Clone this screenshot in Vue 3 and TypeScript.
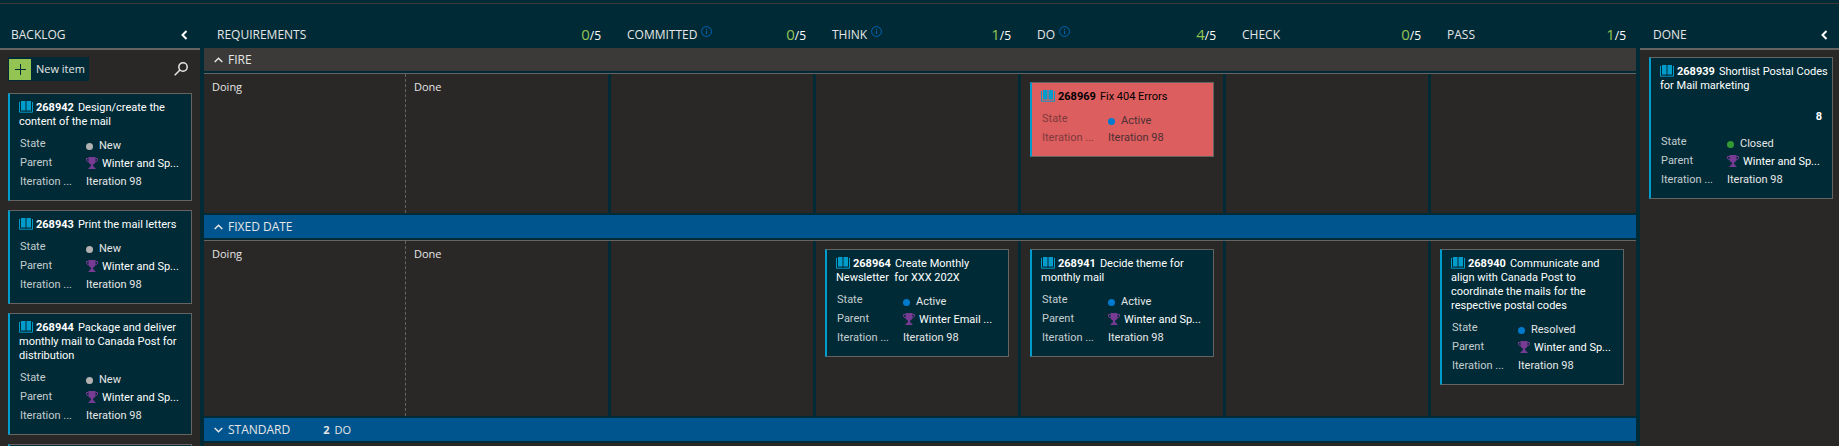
<script setup lang="ts">
import { defineComponent, h } from 'vue'

interface Item {
  id: number
  title: string
  state: string
  parent?: string
  effort?: number
  alert?: boolean
}
interface Column {
  key: string
  name: string
  count?: number
  info?: boolean
}
interface Lane {
  name: string
  color: string
  items: Record<string, Item[]>
}

const spring = 'Winter and Sp...'
const dotColors: Record<string, string> = {
  New: 'new',
  Active: 'active',
  Resolved: 'active',
  Closed: 'closed',
}

const backlog: Item[] = [
  { id: 268942, title: 'Design/create the content of the mail', state: 'New', parent: spring },
  { id: 268943, title: 'Print the mail letters', state: 'New', parent: spring },
  { id: 268944, title: 'Package and deliver monthly mail to Canada Post for distribution', state: 'New', parent: spring },
]
const done: Item[] = [
  { id: 268939, title: 'Shortlist Postal Codes for Mail marketing', state: 'Closed', parent: spring, effort: 8 },
]
const columns: Column[] = [
  { key: 'req', name: 'REQUIREMENTS', count: 0 },
  { key: 'committed', name: 'COMMITTED', count: 0, info: true },
  { key: 'think', name: 'THINK', count: 1, info: true },
  { key: 'do', name: 'DO', count: 4, info: true },
  { key: 'check', name: 'CHECK', count: 0 },
  { key: 'pass', name: 'PASS', count: 1 },
]
const lanes: Lane[] = [
  {
    name: 'FIRE',
    color: 'grey',
    items: { do: [{ id: 268969, title: 'Fix 404 Errors', state: 'Active', alert: true }] },
  },
  {
    name: 'FIXED DATE',
    color: 'blue',
    items: {
      think: [{ id: 268964, title: 'Create Monthly Newsletter\u00a0 for XXX 202X', state: 'Active', parent: 'Winter Email ...' }],
      do: [{ id: 268941, title: 'Decide theme for monthly mail', state: 'Active', parent: spring }],
      pass: [
        {
          id: 268940,
          title: 'Communicate and align with Canada Post to coordinate the mails for the respective postal codes',
          state: 'Resolved',
          parent: spring,
        },
      ],
    },
  },
]

const Card = defineComponent({
  props: { item: { type: Object as () => Item, required: true } },
  setup(props) {
    const book = () =>
      h('svg', { class: 'book', viewBox: '0 0 14 12' }, [
        h('path', { d: 'M2 0h4.5v9.5H2zM7.5 0H12v9.5H7.5z', fill: '#009ccc' }),
        h('path', { d: 'M.5 1v10.2h5.8l.7.5.7-.5h5.8V1', fill: 'none', stroke: '#009ccc' }),
      ])
    const trophy = () =>
      h('svg', { class: 'trophy', viewBox: '0 0 12 12' }, [
        h('path', { d: 'M2.5 0h7v4.5Q9 7 7 7.5V9.5h1.5V12h-5V9.5H5V7.5Q3 7 2.5 4.5z', fill: '#773b93', stroke: 'none' }),
        h('path', { d: 'M2.5 1.5H.5V3Q1 5 3 5M9.5 1.5h2V3Q11 5 9 5M2.5 11.5h7', fill: 'none', stroke: '#773b93' }),
      ])
    return () => {
      const it = props.item
      return h('article', { class: ['card', { alert: it.alert }] }, [
        h('h3', { class: 'title' }, [book(), h('b', String(it.id)), it.title]),
        it.effort ? h('div', { class: 'effort' }, String(it.effort)) : null,
        h('dl', { class: 'fields' }, [
          h('dt', 'State'),
          h('dd', { class: 'state' }, [h('i', { class: ['dot', dotColors[it.state]] }), it.state]),
          it.parent ? h('dt', 'Parent') : null,
          it.parent ? h('dd', { class: 'parent' }, [trophy(), it.parent]) : null,
          h('dt', 'Iteration ...'),
          h('dd', 'Iteration 98'),
        ]),
      ])
    }
  },
})
</script>

<template>
  <main class="page">
    <section class="side">
      <header class="side-head">
        <h2>BACKLOG</h2>
        <button class="icon-btn" aria-label="Collapse backlog">
          <svg class="chev" viewBox="0 0 7 10"><path d="M5.5 1L1.5 5l4 4" /></svg>
        </button>
      </header>
      <div class="side-body">
        <div class="tools">
          <button class="new-item">
            <span class="plus"><svg viewBox="0 0 11 11"><path d="M5.5 0v11M0 5.5h11" /></svg></span>
            New item
          </button>
          <button class="icon-btn" aria-label="Search">
            <svg class="search" viewBox="0 0 14 14"><circle cx="9" cy="5" r="4.2" /><path d="M6 8L.7 13.3" /></svg>
          </button>
        </div>
        <Card v-for="it in backlog" :key="it.id" :item="it" />
        <div class="card next"></div>
      </div>
    </section>

    <section class="board">
      <header class="row heads">
        <div v-for="c in columns" :key="c.key" class="head">
          <h2>{{ c.name }}</h2>
          <svg v-if="c.info" class="info" viewBox="0 0 11 11">
            <circle cx="5.5" cy="5.5" r="4.9" /><path d="M5.5 4.8V8M5.5 2.8V3.9" />
          </svg>
          <span class="count"><em>{{ c.count }}</em>/5</span>
        </div>
      </header>
      <template v-for="lane in lanes" :key="lane.name">
        <button class="lane" :class="lane.color">
          <svg class="arrow" viewBox="0 0 9 6"><path d="M.7 5L4.5 1.2 8.3 5" /></svg>
          {{ lane.name }}
        </button>
        <div class="row cells">
          <div v-for="c in columns" :key="c.key" class="cell" :class="{ split: c.key === 'req' }">
            <template v-if="c.key === 'req'">
              <div class="half">Doing</div>
              <div class="half">Done</div>
            </template>
            <Card v-for="it in lane.items[c.key] || []" :key="it.id" :item="it" />
          </div>
        </div>
      </template>
      <button class="lane blue">
        <svg class="arrow" viewBox="0 0 9 6"><path d="M.7 1L4.5 4.8 8.3 1" /></svg>
        STANDARD
        <span class="summary"><b>2</b>DO</span>
      </button>
      <div class="row rest"></div>
    </section>

    <section class="side last">
      <header class="side-head">
        <h2>DONE</h2>
        <button class="icon-btn" aria-label="Collapse done">
          <svg class="chev" viewBox="0 0 7 10"><path d="M5.5 1L1.5 5l4 4" /></svg>
        </button>
      </header>
      <div class="side-body">
        <Card v-for="it in done" :key="it.id" :item="it" />
      </div>
    </section>
  </main>
</template>

<style>
body {
  margin: 0;
  background: #002b36;
}
</style>

<style scoped>
.page {
  display: grid;
  grid-template-columns: 200px minmax(0, 1fr) 199px;
  column-gap: 4px;
  box-sizing: border-box;
  height: 100vh;
  padding-top: 3px;
  overflow: hidden;
  background: linear-gradient(#3b3a38, #3b3a38) 0 3px / 100% 1px no-repeat #002b36;
  color: #e6e6e6;
  font: 11px/14px 'Open Sans', 'Noto Sans', sans-serif;
}
.page :deep(*) {
  box-sizing: border-box;
}
h2 {
  margin: 0;
  font-size: 12px;
  line-height: 18px;
  font-weight: 400;
}
button {
  padding: 0;
  border: 0;
  background: none;
  color: inherit;
  font: inherit;
  text-align: left;
}
svg {
  display: block;
  fill: none;
  stroke: currentColor;
}
.side {
  display: flex;
  flex-direction: column;
  min-height: 0;
}
.side-head {
  display: flex;
  flex: none;
  align-items: center;
  justify-content: space-between;
  height: 45px;
  padding: 19px 12px 0 11px;
}
.last .side-head {
  padding: 19px 11px 0 13px;
}
.chev {
  width: 7px;
  height: 10px;
  stroke: #fff;
  stroke-width: 2;
}
.side-body {
  display: flex;
  flex: 1;
  flex-direction: column;
  gap: 9px;
  min-height: 0;
  padding: 7px 8px 0;
  overflow: hidden;
  border-top: 2px solid #666462;
  background: #292827;
}
.last .side-body {
  padding: 7px 6px 0 9px;
}
.tools {
  display: flex;
  align-items: center;
  justify-content: space-between;
  height: 24px;
  margin-bottom: 3px;
  padding-right: 4px;
}
.new-item {
  display: flex;
  align-items: center;
  gap: 5px;
  height: 24px;
  padding: 0 4px 0 1px;
  background: #002b36;
}
.plus {
  display: grid;
  place-items: center;
  width: 22px;
  height: 21px;
  background: #92c353;
  color: #002b36;
}
.plus svg {
  width: 11px;
  height: 11px;
}
.search {
  width: 14px;
  height: 14px;
  stroke-width: 1.5;
}
.board {
  display: flex;
  flex-direction: column;
  min-width: 0;
}
.row {
  display: grid;
  grid-template-columns: 407fr repeat(5, 205fr);
}
.heads {
  height: 45px;
  padding-top: 19px;
}
.head {
  display: flex;
  align-items: center;
  padding: 0 10px 0 16px;
}
.head:first-child {
  padding-left: 13px;
}
.info {
  width: 11px;
  height: 11px;
  margin: 0 0 8px 4px;
  stroke: #0064b4;
}
.count {
  margin-left: auto;
  color: #fff;
  font-size: 12px;
  line-height: 18px;
}
.count em {
  color: #92c353;
  font-size: 15px;
  font-style: normal;
}
.lane {
  display: flex;
  flex: none;
  align-items: center;
  height: 23px;
  padding-left: 10px;
  font-size: 12px;
}
.arrow {
  width: 9px;
  height: 6px;
  margin-right: 5px;
  stroke-width: 1.5;
}
.grey {
  background: #3b3a38;
}
.blue {
  background: #00558f;
}
.summary {
  margin-left: 33px;
  font-size: 11px;
}
.summary b {
  margin-right: 5px;
}
.cells {
  min-height: 140px;
  margin: 2px 0;
}
.cell {
  padding: 8px 12px 31px 9px;
  border-top: 1px solid #666462;
  background: #292827;
}
.cell:not(:last-child) {
  box-shadow: inset -3px 0 #002b36;
}
.cell.split {
  display: grid;
  grid-template-columns: 201fr 206fr;
  padding: 0;
}
.half {
  padding: 6px 8px;
}
.half + .half {
  border-left: 1px dashed #666462;
}
.rest {
  flex: 1;
  margin-top: 2px;
  background: #292827;
}
.page :deep(.card) {
  flex: none;
  padding: 7px 4px 9px 9px;
  border: 1px solid #666462;
  border-left: 2px solid #009ccc;
  background: #002b36;
  font-family: Roboto, 'Open Sans', sans-serif;
}
.page :deep(.next) {
  height: 94px;
}
.page :deep(.title) {
  margin: 0 0 5px;
  color: #fff;
  font-size: 11px;
  line-height: 14px;
  font-weight: 400;
}
.page :deep(.title b) {
  margin: 0 4px 0 3px;
}
.page :deep(.book) {
  display: inline-block;
  width: 14px;
  height: 12px;
  vertical-align: -2px;
}
.page :deep(.effort) {
  margin-top: 14px;
  padding-right: 6px;
  color: #fff;
  font-weight: 700;
  line-height: 20px;
  text-align: right;
}
.page :deep(.title:has(+ .effort)) {
  margin: 0;
}
.page :deep(.effort + .fields) {
  margin-top: 5px;
}
.page :deep(.fields) {
  display: grid;
  grid-template-columns: 66px minmax(0, 1fr);
  grid-auto-rows: 19px;
  margin: 0;
  padding-left: 1px;
  line-height: 19px;
  white-space: nowrap;
}
.page :deep(dt) {
  color: #c5cdd0;
}
.page :deep(dd) {
  display: flex;
  align-items: center;
  margin: 0;
}
.page :deep(.state) {
  padding-top: 3px;
}
.page :deep(.parent) {
  padding-top: 1px;
  color: #fff;
}
.page :deep(.dot) {
  width: 7px;
  height: 7px;
  margin: 2px 6px 0 0;
  border-radius: 50%;
}
.page :deep(.new) {
  background: #b2b2b2;
}
.page :deep(.active) {
  background: #007acc;
}
.page :deep(.closed) {
  background: #339933;
}
.page :deep(.trophy) {
  flex: none;
  width: 12px;
  height: 12px;
  margin-right: 4px;
}
.page :deep(.alert) {
  background: #dd5e5e;
  color: #4d2f35;
}
.page :deep(.alert .title) {
  color: #000;
}
.page :deep(.alert dt) {
  color: #7d3a3d;
}
</style>
